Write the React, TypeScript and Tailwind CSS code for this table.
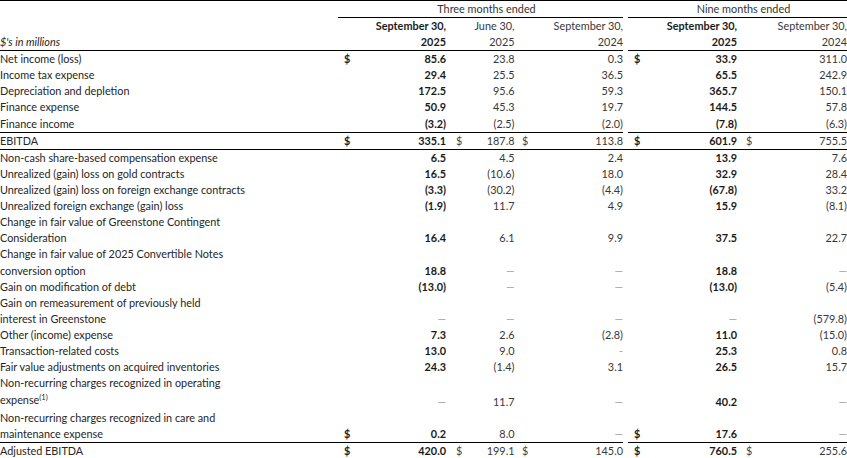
import type { ReactNode } from 'react';

type Row = {
  label: ReactNode[];
  vals: string[];
  dollars?: number[];
  line?: boolean;
};

const top: Row[] = [
  { label: ['Net income (loss)'], vals: ['85.6', '23.8', '0.3', '33.9', '311.0'], dollars: [0, 3] },
  { label: ['Income tax expense'], vals: ['29.4', '25.5', '36.5', '65.5', '242.9'] },
  { label: ['Depreciation and depletion'], vals: ['172.5', '95.6', '59.3', '365.7', '150.1'] },
  { label: ['Finance expense'], vals: ['50.9', '45.3', '19.7', '144.5', '57.8'] },
  { label: ['Finance income'], vals: ['(3.2)', '(2.5)', '(2.0)', '(7.8)', '(6.3)'] },
];

const adjustments: Row[] = [
  { label: ['Non-cash share-based compensation expense'], vals: ['6.5', '4.5', '2.4', '13.9', '7.6'] },
  { label: ['Unrealized (gain) loss on gold contracts'], vals: ['16.5', '(10.6)', '18.0', '32.9', '28.4'] },
  { label: ['Unrealized (gain) loss on foreign exchange contracts'], vals: ['(3.3)', '(30.2)', '(4.4)', '(67.8)', '33.2'] },
  { label: ['Unrealized foreign exchange (gain) loss'], vals: ['(1.9)', '11.7', '4.9', '15.9', '(8.1)'] },
  { label: ['Change in fair value of Greenstone Contingent', 'Consideration'], vals: ['16.4', '6.1', '9.9', '37.5', '22.7'] },
  { label: ['Change in fair value of 2025 Convertible Notes', 'conversion option'], vals: ['18.8', '—', '—', '18.8', '—'] },
  { label: ['Gain on modification of debt'], vals: ['(13.0)', '—', '—', '(13.0)', '(5.4)'] },
  { label: ['Gain on remeasurement of previously held', 'interest in Greenstone'], vals: ['—', '—', '—', '—', '(579.8)'] },
  { label: ['Other (income) expense'], vals: ['7.3', '2.6', '(2.8)', '11.0', '(15.0)'] },
  { label: ['Transaction-related costs'], vals: ['13.0', '9.0', '-', '25.3', '0.8'] },
  { label: ['Fair value adjustments on acquired inventories'], vals: ['24.3', '(1.4)', '3.1', '26.5', '15.7'] },
  {
    label: [
      'Non-recurring charges recognized in operating',
      <>
        expense<span className="relative -top-[4px] text-[7.5px]">(1)</span>
      </>,
    ],
    vals: ['—', '11.7', '—', '40.2', '—'],
  },
  {
    label: ['Non-recurring charges recognized in care and', 'maintenance expense'],
    vals: ['0.2', '8.0', '—', '17.6', '—'],
    dollars: [0, 3],
  },
];

// right padding of the value inside each column, to hit the picture's edges
const padR = ['pr-[4px]', 'pr-[1.5px]', 'pr-0', 'pr-[3px]', 'pr-0'];
const bold = [true, false, false, true, false];
const grid = 'grid grid-cols-[338px_112px_66px_107px_5px_112px_107px]';

function Cell({ v, i, dollar, line }: { v: string; i: number; dollar: boolean; line?: boolean }) {
  const dash = v === '—' || v === '-';
  return (
    <div className={`flex items-end justify-between pl-[6px] ${padR[i]} ${line ? 'border-t border-black' : ''}`}>
      <span className={bold[i] ? 'font-bold text-[#1c1c1c]' : 'text-[#444]'}>{dollar ? '$' : ''}</span>
      <span
        className={
          dash ? 'text-[#a0a0a0]' : bold[i] ? 'font-bold text-[#1a1a1a]' : 'text-[#383838]'
        }
      >
        {v}
      </span>
    </div>
  );
}

function TableRow({ row, leading }: { row: Row; leading: string }) {
  const d = row.dollars ?? [];
  return (
    <div className={`${grid} ${leading}`}>
      <div className={`text-[#262626] whitespace-nowrap ${row.line ? 'border-t border-black' : ''}`}>
        {row.label.map((l, k) => (
          <div key={k}>{l}</div>
        ))}
      </div>
      {row.vals.slice(0, 3).map((v, i) => (
        <Cell key={i} v={v} i={i} dollar={d.includes(i)} line={row.line} />
      ))}
      <div />
      {row.vals.slice(3).map((v, j) => (
        <Cell key={j + 3} v={v} i={j + 3} dollar={d.includes(j + 3)} line={row.line} />
      ))}
    </div>
  );
}

export default function App() {
  const all5 = [0, 1, 2, 3, 4];
  return (
    <div
      className="w-[847px] h-[458px] bg-white text-[10.85px] overflow-hidden"
      style={{ fontFamily: 'Lato, "Noto Sans", sans-serif' }}
    >
      {/* header */}
      <div className="border-t border-black">
        <div className={`${grid} leading-[16px] text-[#333]`}>
          <div />
          <div className="col-span-3 border-b border-black pl-[12px] text-center">Three months ended</div>
          <div />
          <div className="col-span-2 border-b border-black pl-[12px] text-center">Nine months ended</div>
        </div>
        <div className={`${grid} leading-[16px]`}>
          <div className="flex items-end border-b border-black italic text-[#262626]">$'s in millions</div>
          <div className="border-b border-black pr-[4px] text-right font-bold text-[#1c1c1c]">
            <div>September 30,</div>
            <div>2025</div>
          </div>
          <div className="border-b border-black pr-[1.5px] text-right text-[#383838]">
            <div>June 30,</div>
            <div>2025</div>
          </div>
          <div className="border-b border-black text-right text-[#383838]">
            <div>September 30,</div>
            <div>2024</div>
          </div>
          <div />
          <div className="border-b border-black pr-[3px] text-right font-bold text-[#1c1c1c]">
            <div>September 30,</div>
            <div>2025</div>
          </div>
          <div className="border-b border-black text-right text-[#383838]">
            <div>September 30,</div>
            <div>2024</div>
          </div>
        </div>
      </div>

      {top.map((r, k) => (
        <TableRow key={k} row={r} leading="leading-[16.12px]" />
      ))}
      <TableRow
        row={{ label: ['EBITDA'], vals: ['335.1', '187.8', '113.8', '601.9', '755.5'], dollars: all5, line: true }}
        leading="leading-[16px]"
      />
      <div className="border-t border-black">
        {adjustments.map((r, k) => (
          <TableRow key={k} row={r} leading="leading-[16.13px]" />
        ))}
      </div>
      <div className="border-b border-black">
        <TableRow
          row={{ label: ['Adjusted EBITDA'], vals: ['420.0', '199.1', '145.0', '760.5', '255.6'], dollars: all5, line: true }}
          leading="leading-[15px]"
        />
      </div>
    </div>
  );
}
